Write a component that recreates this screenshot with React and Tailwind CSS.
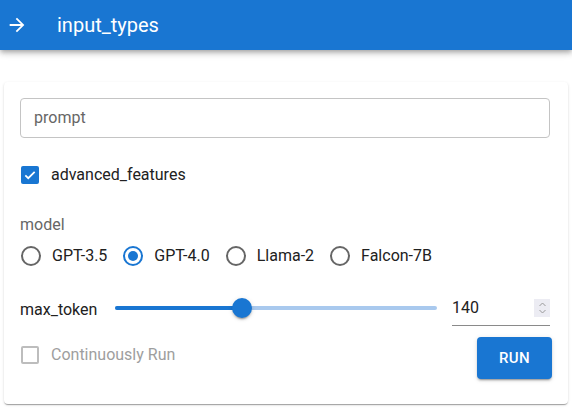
import React, { useState } from "react";

function Radio({ checked, label, onClick }) {
  return (
    <label onClick={onClick} className="flex items-center cursor-pointer">
      <span className="w-[20px] h-[20px] rounded-full flex items-center justify-center border-2 border-[#666] data-[on=true]:border-[#1976d2]" data-on={checked}>
        {checked && <span className="w-[10px] h-[10px] rounded-full bg-[#1976d2]" />}
      </span>
      <span className="ml-[11px] text-[16px] text-[#212121]">{label}</span>
    </label>
  );
}

export default function App() {
  const [model, setModel] = useState("GPT-4.0");
  const [advanced, setAdvanced] = useState(true);
  const models = ["GPT-3.5", "GPT-4.0", "Llama-2", "Falcon-7B"];

  return (
    <div className="w-[572px] h-[413px] bg-white font-['Roboto',sans-serif] overflow-hidden">
      <div className="h-[50px] bg-[#1976d2] flex items-center shadow-[0_2px_4px_-1px_rgba(0,0,0,0.2),0_4px_5px_0_rgba(0,0,0,0.14),0_1px_10px_0_rgba(0,0,0,0.12)] relative">
        <svg className="ml-[6px]" width="22" height="22" viewBox="0 0 24 24" fill="white">
          <path d="M12 4l-1.41 1.41L16.17 11H4v2h12.17l-5.58 5.59L12 20l8-8z" />
        </svg>
        <span className="ml-[29px] text-white text-[20px] font-normal">input_types</span>
      </div>

      <div className="mx-[4px] mt-[32px] h-[322px] rounded-[4px] bg-white shadow-[0_2px_1px_-1px_rgba(0,0,0,0.2),0_1px_1px_0_rgba(0,0,0,0.14),0_1px_3px_0_rgba(0,0,0,0.12)] px-[16px] pt-[16px]">
        <div className="h-[40px] w-[530px] border border-[#c4c4c4] rounded-[4px] flex items-center px-[13px] text-[16px] text-[#666]">
          prompt
        </div>

        <label className="mt-[25px] flex items-center cursor-pointer" onClick={() => setAdvanced(!advanced)}>
          <span className="ml-[1px] w-[18px] h-[18px] rounded-[2px] bg-[#1976d2] flex items-center justify-center">
            {advanced && (
              <svg width="14" height="14" viewBox="0 0 24 24" fill="none" stroke="white" strokeWidth="3">
                <path d="M4 12.5l5 5L20 6.5" />
              </svg>
            )}
          </span>
          <span className="ml-[12px] text-[16px] text-[#212121]">advanced_features</span>
        </label>

        <div className="mt-[28px] text-[16px] text-[#666] leading-[20px]">model</div>
        <div className="mt-[9px] flex items-center gap-[16px] pl-[1px]">
          {models.map((m) => (
            <Radio key={m} label={m} checked={model === m} onClick={() => setModel(m)} />
          ))}
        </div>

        <div className="mt-[22px] flex items-center h-[36px]">
          <span className="text-[16px] text-[#212121] w-[95px] mt-[4px]">max_token</span>
          <div className="relative w-[322px] h-[20px] flex items-center">
            <div className="h-[4px] w-full rounded-full bg-[#a9c9ee]" />
            <div className="absolute left-0 h-[4px] w-[127px] rounded-full bg-[#1976d2]" />
            <div className="absolute left-[117px] w-[20px] h-[20px] rounded-full bg-[#1976d2] shadow-[0_3px_1px_-2px_rgba(0,0,0,0.2),0_2px_2px_0_rgba(0,0,0,0.14),0_1px_5px_0_rgba(0,0,0,0.12)]" />
          </div>
          <div className="ml-[15px] w-[98px] h-[36px] border-b border-[#8a8a8a] flex items-center justify-between">
            <span className="text-[16px] text-[#212121]">140</span>
            <span className="w-[16px] h-[18px] bg-[#ececf3] flex flex-col items-center justify-center">
              <svg width="9" height="14" viewBox="0 0 9 14" fill="none" stroke="#9a9a9a" strokeWidth="1">
                <path d="M1.5 5L4.5 2L7.5 5" />
                <path d="M1.5 9L4.5 12L7.5 9" />
              </svg>
            </span>
          </div>
        </div>

        <div className="mt-[11px] flex items-start justify-between">
          <label className="flex items-center mt-[6px]">
            <span className="ml-[1px] w-[18px] h-[18px] rounded-[2px] border-2 border-[#bdbdbd]" />
            <span className="ml-[12px] text-[16px] text-[#9e9e9e]">Continuously Run</span>
          </label>
          <button className="w-[75px] h-[42px] rounded-[4px] bg-[#1976d2] text-white text-[15px] font-medium tracking-[0.4px] shadow-[0_3px_1px_-2px_rgba(0,0,0,0.2),0_2px_2px_0_rgba(0,0,0,0.14),0_1px_5px_0_rgba(0,0,0,0.12)]">
            RUN
          </button>
        </div>
      </div>
    </div>
  );
}
